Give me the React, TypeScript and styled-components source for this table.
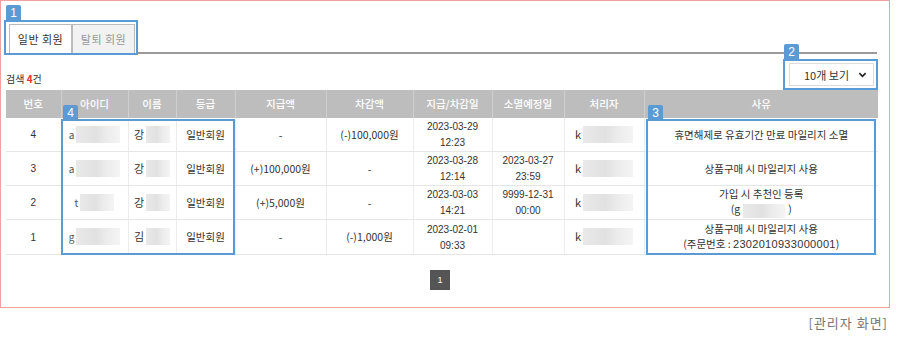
import React from 'react';
import styled, { createGlobalStyle } from 'styled-components';

const GlobalStyle = createGlobalStyle`
  body {
    margin: 0;
    background: #fff;
    font-family: "Noto Sans CJK KR", "Noto Sans", sans-serif;
    color: #333;
  }
`;

const Page = styled.div`
  width: 900px;
  height: 344px;
`;

const Frame = styled.div`
  box-sizing: border-box;
  width: 890px;
  height: 308px;
  border: 1.5px solid #f3a0a0;
  padding: 3px 12px 0 3px;
`;

const TabRow = styled.div`
  display: flex;
  align-items: flex-end;
  padding-top: 16px;
`;

const TabGroup = styled.div`
  position: relative;
  display: flex;
  border: 2px solid #5b9bd5;
  padding: 2px 1px 0 3px;
`;

const Badge = styled.span<{ $top: number; $left: number }>`
  position: absolute;
  top: ${(p) => p.$top}px;
  left: ${(p) => p.$left}px;
  width: 15px;
  height: 16px;
  background: #5b9bd5;
  color: #fff;
  font-family: "Liberation Sans", Arial, sans-serif;
  font-size: 12px;
  line-height: 16px;
  text-align: center;
  border-radius: 2px 2px 0 0;
`;

const Tab = styled.div<{ $active?: boolean }>`
  width: 63px;
  height: 29px;
  box-sizing: border-box;
  border: 1px solid #bbb;
  border-bottom: none;
  background: ${(p) => (p.$active ? '#fff' : '#f2f2f2')};
  color: ${(p) => (p.$active ? '#333' : '#999')};
  font-size: 11px;
  letter-spacing: 0.5px;
  line-height: 28px;
  text-align: center;
`;

const TabLine = styled.div`
  flex: 1;
  height: 2px;
  background: #9a9a9a;
  margin-bottom: 1px;
`;

const Toolbar = styled.div`
  display: flex;
  justify-content: space-between;
  align-items: flex-end;
  margin: 4px 0 0 2px;
`;

const Count = styled.div`
  font-size: 10px;
  color: #333;
  margin-bottom: 4px;

  b {
    color: #e53030;
  }
`;

const SelectBox = styled.div`
  position: relative;
  border: 2px solid #5b9bd5;
  padding: 2px 2px 2px 4px;
  margin-right: -1px;
`;

const Select = styled.div`
  width: 85px;
  height: 23px;
  box-sizing: border-box;
  border: 1px solid #ddd;
  display: flex;
  align-items: center;
  justify-content: space-between;
  padding: 0 6px 0 14px;
  font-size: 11px;
  color: #333;
`;

const TableWrap = styled.div`
  position: relative;
  margin-left: 2px;
  width: 872px;
`;

const Table = styled.table`
  width: 872px;
  border-collapse: collapse;
  table-layout: fixed;
  font-size: 10.5px;
  text-align: center;
`;

const Th = styled.th`
  height: 28px;
  padding: 0;
  background: #bdbdbd;
  color: #fff;
  font-weight: 500;
  font-size: 10.5px;
  line-height: 14px;
  border-right: 1px solid #cfcfcf;

  &:last-child {
    border-right: none;
  }
`;

const Td = styled.td<{ $h: number }>`
  height: ${(p) => p.$h}px;
  box-sizing: border-box;
  padding: 0;
  border-bottom: 1px solid #e6e6e6;
  border-right: 1px solid #ececec;
  line-height: 15px;
  color: #333;

  &:last-child {
    border-right: none;
  }
`;

const Small = styled.span`
  font-family: "Liberation Sans", Arial, sans-serif;
  font-size: 10px;
  color: #333;
`;

const Digits = styled.span`
  font-family: "Liberation Sans", Arial, sans-serif;
  font-size: 11px;
  letter-spacing: 0.3px;
`;

const Blur = styled.span<{ $w: number }>`
  display: inline-block;
  vertical-align: middle;
  width: ${(p) => p.$w}px;
  height: 17px;
  background: linear-gradient(90deg, #e9e9e9 0%, #e1e1e1 45%, #ececec 70%, #f4f4f4 100%);
`;

const Masked = styled.span`
  display: inline-flex;
  align-items: center;
  gap: 2px;
  line-height: 17px;
  color: #555;
  font-size: 10px;
`;

const Overlay = styled.div<{ $left: number; $width: number }>`
  position: absolute;
  top: 29px;
  left: ${(p) => p.$left}px;
  width: ${(p) => p.$width}px;
  bottom: 0;
  box-sizing: border-box;
  border: 2px solid #5b9bd5;
  pointer-events: none;
`;

const Pager = styled.div`
  display: flex;
  justify-content: center;
  margin-top: 15px;
  width: 872px;
`;

const PageNum = styled.div`
  width: 20px;
  height: 20px;
  background: #555;
  color: #fff;
  font-family: "Liberation Sans", Arial, sans-serif;
  font-size: 9px;
  line-height: 20px;
  text-align: center;
`;

const Caption = styled.div`
  width: 888px;
  text-align: right;
  margin-top: 5px;
  font-size: 13px;
  letter-spacing: 1px;
  color: #777;
`;

const cols = [55, 67, 48, 59, 91, 87, 79, 72, 80, 234];
const heads = ['번호', '아이디', '이름', '등급', '지급액', '차감액', '지급/차감일', '소멸예정일', '처리자', '사유'];

type Row = {
  no: string;
  id: string;
  idW: number;
  name: string;
  give: string;
  take: string;
  date: [string, string];
  expire?: [string, string];
  reason: React.ReactNode;
  h: number;
};

const rows: Row[] = [
  { no: '4', id: 'a', idW: 44, name: '강', give: '-', take: '(-)100,000원', date: ['2023-03-29', '12:23'], reason: '휴면해제로 유효기간 만료 마일리지 소멸', h: 33 },
  { no: '3', id: 'a', idW: 44, name: '강', give: '(+)100,000원', take: '-', date: ['2023-03-28', '12:14'], expire: ['2023-03-27', '23:59'], reason: '상품구매 시 마일리지 사용', h: 34 },
  { no: '2', id: 't', idW: 34, name: '강', give: '(+)5,000원', take: '-', date: ['2023-03-03', '14:21'], expire: ['9999-12-31', '00:00'], reason: (<>가입 시 추천인 등록<br />(g<Blur $w={42} style={{ height: 14, margin: '0 3px' }} />)</>), h: 34 },
  { no: '1', id: 'g', idW: 44, name: '김', give: '-', take: '(-)1,000원', date: ['2023-02-01', '09:33'], reason: (<>상품구매 시 마일리지 사용<br />(주문번호 : <Digits>2302010933000001</Digits>)</>), h: 35 },
];

export default function App() {
  return (
    <Page>
      <GlobalStyle />
      <Frame>
        <TabRow>
          <TabGroup>
            <Badge $top={-17} $left={0}>1</Badge>
            <Tab $active>일반 회원</Tab>
            <Tab>탈퇴 회원</Tab>
          </TabGroup>
          <TabLine />
        </TabRow>

        <Toolbar>
          <Count>검색 <b>4</b>건</Count>
          <SelectBox>
            <Badge $top={-17} $left={-1}>2</Badge>
            <Select>
              10개 보기
              <svg width="9" height="9" viewBox="0 0 10 10">
                <path d="M1.5 3.5 L5 7 L8.5 3.5" fill="none" stroke="#222" strokeWidth="1.8" />
              </svg>
            </Select>
          </SelectBox>
        </Toolbar>

        <TableWrap>
          <Table>
            <colgroup>
              {cols.map((w, i) => (
                <col key={i} style={{ width: w }} />
              ))}
            </colgroup>
            <thead>
              <tr>
                {heads.map((h) => (
                  <Th key={h}>{h}</Th>
                ))}
              </tr>
            </thead>
            <tbody>
              {rows.map((r) => (
                <tr key={r.no}>
                  <Td $h={r.h}><Small>{r.no}</Small></Td>
                  <Td $h={r.h}>
                    <Masked>{r.id}<Blur $w={r.idW} /></Masked>
                  </Td>
                  <Td $h={r.h}>
                    <Masked style={{ fontSize: 11, color: '#333' }}>{r.name}<Blur $w={24} /></Masked>
                  </Td>
                  <Td $h={r.h}>일반회원</Td>
                  <Td $h={r.h}>{r.give}</Td>
                  <Td $h={r.h}>{r.take}</Td>
                  <Td $h={r.h}>
                    <Small>{r.date[0]}<br />{r.date[1]}</Small>
                  </Td>
                  <Td $h={r.h}>
                    {r.expire && <Small>{r.expire[0]}<br />{r.expire[1]}</Small>}
                  </Td>
                  <Td $h={r.h}>
                    <Masked style={{ fontSize: 11, color: '#333' }}>k<Blur $w={50} /></Masked>
                  </Td>
                  <Td $h={r.h}>{r.reason}</Td>
                </tr>
              ))}
            </tbody>
          </Table>
          <Overlay $left={55} $width={174}>
            <Badge $top={-16} $left={0}>4</Badge>
          </Overlay>
          <Overlay $left={640} $width={230}>
            <Badge $top={-16} $left={0}>3</Badge>
          </Overlay>
        </TableWrap>

        <Pager>
          <PageNum>1</PageNum>
        </Pager>
      </Frame>
      <Caption>[관리자 화면]</Caption>
    </Page>
  );
}
